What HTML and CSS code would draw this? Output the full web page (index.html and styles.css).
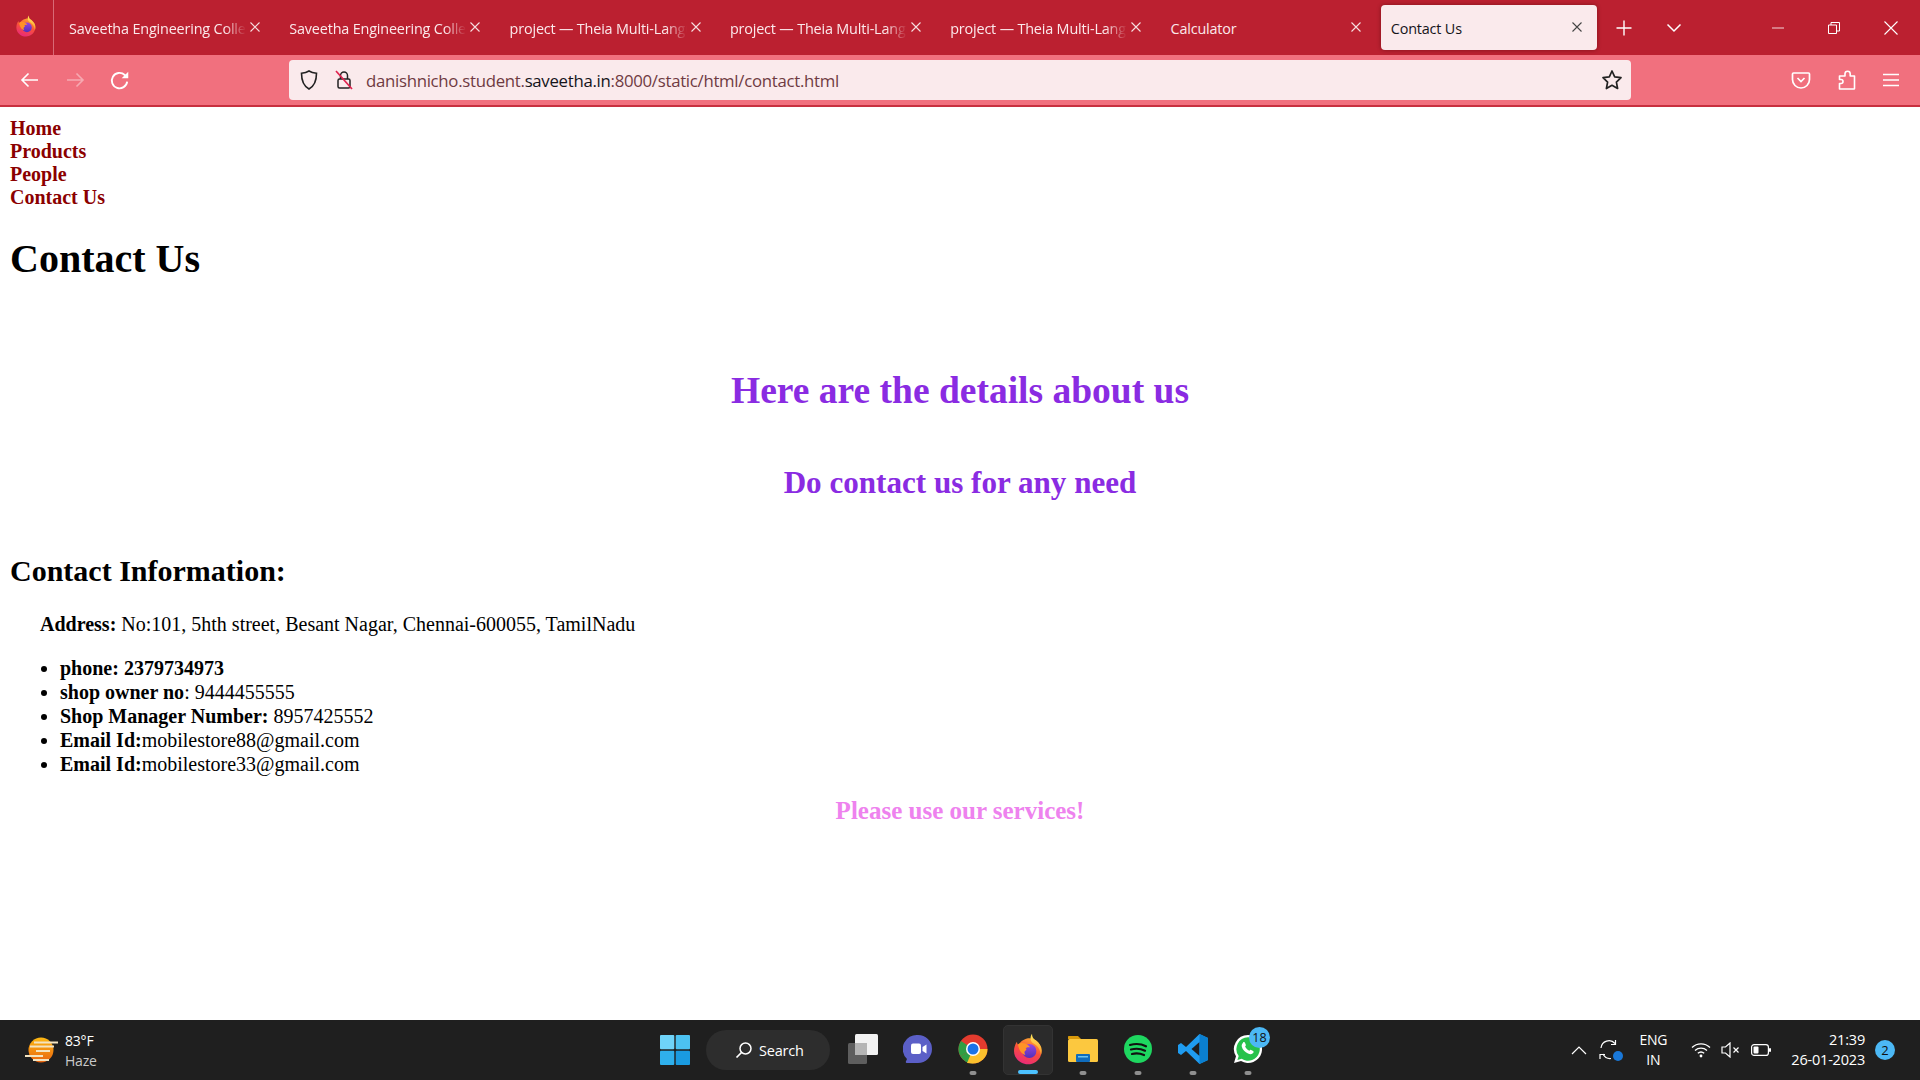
FILE: index.html
```html
<!DOCTYPE html>
<html lang="en">
<head>
<meta charset="utf-8">
<title>Contact Us</title>
<link rel="stylesheet" href="styles.css">
</head>
<body>
<svg class="defs" width="0" height="0" aria-hidden="true">
  <defs>
    <linearGradient id="fxBody" x1="0.8" y1="0" x2="0.4" y2="1"><stop offset="0" stop-color="#ffb02e"/><stop offset="0.5" stop-color="#f9503a"/><stop offset="1" stop-color="#ea2a78"/></linearGradient>
    <linearGradient id="fxTop" x1="0.5" y1="0" x2="0.5" y2="1"><stop offset="0" stop-color="#ffe75c"/><stop offset="1" stop-color="#ff9a2b"/></linearGradient>
    <linearGradient id="fxCore" x1="0.5" y1="0" x2="0.5" y2="1"><stop offset="0" stop-color="#9a45e0"/><stop offset="1" stop-color="#5030b8"/></linearGradient>
    <symbol id="firefox" viewBox="0 0 24 24">
      <path d="M12 4c2.500-.3 5.500.5 7.500 3 2.500 2.800 3.200 6.500 2 10-1.500 4-5.300 6.500-9.500 6.500C6.500 23.500 1.500 19.200 1.500 13.500c0-2.500.8-5 2.200-7 .1 1.200.5 2 1.200 2.500C6 7 8 5 12 4z" fill="url(#fxBody)"/>
      <path d="M15 .5c0 2.500 1 3.800 3 5.200 2.500 1.800 4.300 4.500 4.300 7.500 0 1.300-.2 2.500-.6 3.500-.3-3.800-2.200-7-5.200-8.700-2.700-1.500-3.500-4.500-1.500-7.500z" fill="url(#fxTop)"/>
      <circle cx="13" cy="13.500" r="5.300" fill="url(#fxCore)"/>
      <path d="M4.500 8.500c1.500-1.200 3.500-1.400 5.500-.6 1.500.6 3 1.800 3.500 2.800-1.500-.2-2.700 0-3.300.8.800.5.800 1.300 0 1.700-1.200.6-.9 2.300-.2 3.300-2.700-.5-5-3.500-5.500-8z" fill="#ff9326"/>
    </symbol>
    <symbol id="x" viewBox="0 0 12 12"><path d="M1.500 1.500l9 9M10.500 1.500l-9 9" fill="none" stroke="currentColor" stroke-width="1.100"/></symbol>
  </defs>
</svg>

<header class="browser">
  <div class="tabbar">
    <div class="appmenu"><svg class="fx-small" width="22" height="22"><use href="#firefox"/></svg></div>
    <div class="tabs">
      <div class="tab"><span class="tab-title fade">Saveetha Engineering College</span><svg class="tab-x" width="12" height="12"><use href="#x"/></svg></div>
      <div class="tab"><span class="tab-title fade">Saveetha Engineering College</span><svg class="tab-x" width="12" height="12"><use href="#x"/></svg></div>
      <div class="tab"><span class="tab-title fade">project — Theia Multi-Language</span><svg class="tab-x" width="12" height="12"><use href="#x"/></svg></div>
      <div class="tab"><span class="tab-title fade">project — Theia Multi-Language</span><svg class="tab-x" width="12" height="12"><use href="#x"/></svg></div>
      <div class="tab"><span class="tab-title fade">project — Theia Multi-Language</span><svg class="tab-x" width="12" height="12"><use href="#x"/></svg></div>
      <div class="tab"><span class="tab-title">Calculator</span><svg class="tab-x" width="12" height="12"><use href="#x"/></svg></div>
      <div class="tab active"><span class="tab-title">Contact Us</span><svg class="tab-x" width="12" height="12"><use href="#x"/></svg></div>
    </div>
    <svg class="newtab" width="16" height="16" viewBox="0 0 16 16"><path d="M8 .5v15M.5 8h15" stroke="#fff" stroke-width="1.400" fill="none"/></svg>
    <svg class="tablist" width="16" height="10" viewBox="0 0 16 10"><path d="M1.500 1.500L8 8l6.500-6.500" stroke="#fff" stroke-width="1.500" fill="none"/></svg>
    <div class="winctl">
      <svg width="12" height="12" viewBox="0 0 12 12"><path d="M0 6h12" stroke="#f3d5d8" stroke-width="1"/></svg>
      <svg width="12" height="12" viewBox="0 0 12 12"><path d="M.5 3h8v8.500h-8zM3 3V.5h8.500V9H8.500" stroke="#fff" stroke-width="1" fill="none"/></svg>
      <svg width="14" height="14" viewBox="0 0 14 14"><path d="M.5.500l13 13M13.500.500l-13 13" stroke="#fff" stroke-width="1.100" fill="none"/></svg>
    </div>
  </div>
  <div class="toolbar">
    <div class="nav-buttons">
      <svg width="20" height="16" viewBox="0 0 20 16"><path d="M18 8H2M8.500 1.500L2 8l6.500 6.500" stroke="#fff" stroke-width="1.600" fill="none"/></svg>
      <svg class="dim" width="20" height="16" viewBox="0 0 20 16"><path d="M2 8h16M11.500 1.500L18 8l-6.500 6.500" stroke="#fff" stroke-width="1.600" fill="none"/></svg>
      <svg class="reload" width="22" height="22" viewBox="0 0 20 20"><path d="M16.500 10.500a7 7 0 1 1-2.200-6L16 6" stroke="#fff" stroke-width="1.700" fill="none"/><path d="M17.500 1.500v6h-6z" fill="#fff"/></svg>
    </div>
    <div class="urlbar">
      <svg width="20" height="22" viewBox="0 0 20 22"><path d="M10 2c2.500 1.500 5 2 7.500 2.300 0 7-1.500 12.500-7.500 15.700C4 16.800 2.500 11.300 2.500 4.300 5 4 7.500 3.500 10 2z" fill="none" stroke="#222" stroke-width="1.600"/></svg>
      <svg class="lock" width="20" height="22" viewBox="0 0 20 22"><path d="M6.500 10V6.500a3.500 3.500 0 0 1 7 0V10" fill="none" stroke="#222" stroke-width="1.500"/><rect x="4" y="10" width="12" height="9" rx="1.500" fill="none" stroke="#222" stroke-width="1.500"/><path d="M2 2l16 18" stroke="#e0224e" stroke-width="1.700"/></svg>
      <div class="url"><span class="url-dim">danishnicho.student.</span><span class="url-host">saveetha.in</span><span class="url-dim">:8000/static/html/contact.html</span></div>
      <svg class="star" width="22" height="22" viewBox="0 0 22 22"><path d="M11 2l2.700 5.900 6.300.8-4.600 4.400 1.200 6.400L11 16.300l-5.600 3.200 1.200-6.400L2 8.700l6.300-.8z" fill="none" stroke="#222" stroke-width="1.700" stroke-linejoin="round"/></svg>
    </div>
    <div class="tools">
      <svg width="20" height="20" viewBox="0 0 20 20"><path d="M2.500 3h15c.6 0 1 .4 1 1v5.500a8.500 8.500 0 0 1-17 0V4c0-.6.4-1 1-1z" fill="none" stroke="#fff" stroke-width="1.700"/><path d="M6.500 8l3.500 3.500L13.500 8" fill="none" stroke="#fff" stroke-width="1.700"/></svg>
      <svg width="20" height="22" viewBox="0 0 20 22"><path d="M2.500 20v-5.500H4a2 2 0 0 0 0-4H2.500V7H8V4.800a2.600 2.600 0 0 1 5.200 0V7h4.300v12.500a.5.500 0 0 1-.5.500z" fill="none" stroke="#fff" stroke-width="1.600" stroke-linejoin="round"/></svg>
      <svg width="16" height="14" viewBox="0 0 16 14"><path d="M0 1.500h16M0 7h16M0 12.500h16" stroke="#fff" stroke-width="1.500"/></svg>
    </div>
  </div>
</header>

<main class="page">
  <nav class="site-nav">
    <a href="#">Home</a>
    <a href="#">Products</a>
    <a href="#">People</a>
    <a href="#">Contact Us</a>
  </nav>
  <h1 class="page-title">Contact Us</h1>
  <h1 class="lead">Here are the details about us</h1>
  <h2 class="sublead">Do contact us for any need</h2>
  <h2 class="info-title">Contact Information:</h2>
  <p class="address"><b>Address:</b> No:101, 5hth street, Besant Nagar, Chennai-600055, TamilNadu</p>
  <ul class="contacts">
    <li><b>phone: 2379734973</b></li>
    <li><b>shop owner no</b>: 9444455555</li>
    <li><b>Shop Manager Number:</b> 8957425552</li>
    <li><b>Email Id:</b>mobilestore88@gmail.com</li>
    <li><b>Email Id:</b>mobilestore33@gmail.com</li>
  </ul>
  <h3 class="closing">Please use our services!</h3>
</main>

<footer class="taskbar">
  <div class="weather">
    <svg width="34" height="28" viewBox="0 0 34 28">
      <defs><linearGradient id="sun" x1="0" y1="0" x2="0" y2="1"><stop offset="0" stop-color="#fdb913"/><stop offset="1" stop-color="#e8620e"/></linearGradient></defs>
      <circle cx="17" cy="14" r="12.500" fill="url(#sun)"/>
      <path d="M10 6.500h24M6 10.500h24M12 15h14M1 20h18M9 24h16" stroke="#f3e3c0" stroke-width="2.200"/>
    </svg>
    <div class="weather-text"><span>83°F</span><span class="haze">Haze</span></div>
  </div>
  <div class="task-center">
    <svg class="task-icon" width="30" height="30" viewBox="0 0 30 30">
      <rect x="0" y="0" width="14.300" height="14.300" rx="1" fill="#6fd3f8"/><rect x="15.700" y="0" width="14.300" height="14.300" rx="1" fill="#4cc2f1"/><rect x="0" y="15.700" width="14.300" height="14.300" rx="1" fill="#2fb0ec"/><rect x="15.700" y="15.700" width="14.300" height="14.300" rx="1" fill="#1a9be0"/>
    </svg>
    <div class="search">
      <svg width="18" height="18" viewBox="0 0 18 18"><circle cx="10.500" cy="7.500" r="5.500" fill="none" stroke="#fff" stroke-width="1.500"/><path d="M6.500 11.500L1.500 16.500" stroke="#fff" stroke-width="1.700"/></svg>
      <span>Search</span>
    </div>
    <div class="apps">
      <div class="app"><svg width="30" height="30" viewBox="0 0 30 30"><rect x="0" y="9" width="19" height="21" rx="1.500" fill="#5e5e5e"/><rect x="7" y="0" width="23" height="21" rx="1.500" fill="#f2f2f2"/><rect x="7" y="9" width="12" height="12" fill="#b5b5b5"/></svg></div>
      <div class="app"><svg width="30" height="30" viewBox="0 0 30 30"><path d="M15 1a14 14 0 0 1 0 28H4c-1 0-1.500-.8-1-1.700l1-2.300A14 14 0 0 1 15 1z" fill="#5b5fc7"/><rect x="8" y="9.500" width="10" height="10.500" rx="2" fill="#fff"/><path d="M19.500 13l4-2.500v9l-4-2.500z" fill="#fff"/></svg></div>
      <div class="app running"><svg width="30" height="30" viewBox="0 0 30 30"><circle cx="15" cy="15" r="14.500" fill="#e33b2e"/><path d="M15 15L2.500 22.300A14.500 14.500 0 0 0 15 29.500z" fill="#2f9e44"/><path d="M15 15L2.500 22.300A14.500 14.500 0 0 1 3 7L15 15z" fill="#2f9e44"/><path d="M15 15h14.500A14.500 14.500 0 0 1 15 29.500L9 29z" fill="#fbc02d"/><circle cx="15" cy="15" r="7" fill="#fff"/><circle cx="15" cy="15" r="5.500" fill="#1a73e8"/></svg></div>
      <div class="app current"><svg width="32" height="32"><use href="#firefox"/></svg></div>
      <div class="app running"><svg width="30" height="30" viewBox="0 0 30 30"><path d="M0 3c0-.6.4-1 1-1h9l3 3h-13z" fill="#d99a0b"/><rect x="0" y="5" width="30" height="23" rx="1.500" fill="#fcc83f"/><rect x="8" y="20" width="14" height="8" rx="1" fill="#0f6cbd"/><rect x="10" y="22" width="10" height="1.500" fill="#6cc3f0"/></svg></div>
      <div class="app running"><svg width="30" height="30" viewBox="0 0 30 30"><circle cx="15" cy="15" r="14" fill="#1ed760"/><path d="M7 11c6-1.700 11-1.300 16 1.300M8 15.500c5-1.300 9.500-1 14 1.200M9 20c4-1 8-.7 12 1" fill="none" stroke="#111" stroke-width="2.200" stroke-linecap="round"/></svg></div>
      <div class="app running"><svg width="30" height="30" viewBox="0 0 30 30"><path d="M21.500 0L30 4v22l-8.500 4L8 17l-5 4-3-2V11l3-2 5 4z" fill="#1f9cf0"/><path d="M21.500 8l-8 7 8 7z" fill="#1f1f1f"/><path d="M21.500 0L30 4v22l-8.500 4z" fill="#0a7fd0"/></svg></div>
      <div class="app running whatsapp"><svg width="30" height="30" viewBox="0 0 30 30"><path d="M15 1a14 14 0 1 1-7 26.100L1 29l2-6.700A14 14 0 0 1 15 1z" fill="#fff"/><path d="M15 3.300a11.700 11.700 0 1 1-6.300 21.500l-4.300 1.300 1.300-4.200A11.700 11.700 0 0 1 15 3.300z" fill="#27c24c"/><path d="M10 8.500c1-.8 1.700-.5 2.200.7l.6 1.500c.2.600 0 1-.7 1.700.9 1.900 2.300 3.300 4.300 4.300.7-.8 1.100-1 1.700-.8l1.600.8c1 .5 1.200 1.100.6 2.100-1 1.500-3 1.800-5.300.7-3-1.400-5.300-3.700-6.200-6.800-.4-1.700.3-3.200 1.200-3.700z" fill="#fff"/></svg><span class="wa-badge">18</span></div>
    </div>
  </div>
  <div class="tray">
    <svg class="tray-chev" width="16" height="10" viewBox="0 0 16 10"><path d="M1 9l7-7 7 7" stroke="#fff" stroke-width="1.200" fill="none"/></svg>
    <div class="sync"><svg width="22" height="22" viewBox="0 0 22 22"><path d="M2 9a8 8 0 0 1 14-4.500M4 15a8 8 0 0 0 8 4.500" fill="none" stroke="#fff" stroke-width="1.200"/><path d="M16.500 1v4.500H12M1 20v-4.500h5" fill="none" stroke="#fff" stroke-width="1.200"/></svg><span class="sync-dot"></span></div>
    <div class="lang"><span>ENG</span><span>IN</span></div>
    <div class="tray-icons">
      <svg width="20" height="16" viewBox="0 0 20 16"><path d="M1 5.500a13 13 0 0 1 18 0M4 8.500a9 9 0 0 1 12 0M6.800 11.300a5 5 0 0 1 6.400 0" fill="none" stroke="#fff" stroke-width="1.300"/><circle cx="10" cy="14" r="1.400" fill="#fff"/></svg>
      <svg width="20" height="16" viewBox="0 0 20 16"><path d="M1 5h3.500L9 1v14l-4.500-4H1z" fill="none" stroke="#fff" stroke-width="1.200"/><path d="M12.500 5.500l5 5M17.500 5.500l-5 5" stroke="#fff" stroke-width="1.200"/></svg>
      <svg width="20" height="14" viewBox="0 0 20 14"><rect x=".6" y="1.600" width="16.800" height="10.800" rx="2.500" fill="none" stroke="#fff" stroke-width="1.200"/><rect x="2.500" y="3.500" width="5" height="7" rx="1" fill="#fff"/><rect x="18" y="5" width="2" height="4" rx="1" fill="#fff"/></svg>
    </div>
    <div class="clock"><span>21:39</span><span>26-01-2023</span></div>
    <span class="notif">2</span>
  </div>
</footer>
</body>
</html>
```
FILE: styles.css
```css
* { box-sizing: border-box; }
html, body { margin: 0; height: 100%; overflow: hidden; }
body {
  display: flex;
  flex-direction: column;
  height: 1080px;
  background: #fff;
  font-family: "Liberation Serif", "Times New Roman", serif;
  color: #000;
}
.defs { position: absolute; }

/* browser chrome */
.browser { font-family: "Open Sans", "Noto Sans", sans-serif; flex: none; }
.tabbar {
  height: 55px;
  background: #bb2030;
  display: flex;
  align-items: center;
  color: #fff;
}
.appmenu {
  width: 54px;
  height: 55px;
  border-right: 1px solid #d86a76;
  display: flex;
  align-items: center;
  justify-content: center;
  padding-bottom: 4px;
  padding-right: 2px;
}
.tabs { display: flex; margin-left: 5px; }
.tab {
  width: 220.3px;
  height: 45px;
  padding: 0 0 0 10px;
  display: flex;
  align-items: center;
  position: relative;
  font-size: 14.400px;
  color: #fbe9eb;
}
.tab-title { width: 177px; padding-top: 2px; white-space: nowrap; overflow: hidden; flex: none; letter-spacing: -0.17px; }
.tab-title.fade {
  -webkit-mask-image: linear-gradient(to right, #000 88%, transparent 100%);
  mask-image: linear-gradient(to right, #000 88%, transparent 100%);
}
.tab-x { margin-left: 3px; margin-top: -2px; color: #f7dfe1; flex: none; }
.tab.active {
  background: #faeaec;
  color: #15141a;
  border-radius: 4px;
  box-shadow: 0 0 4px rgba(60, 0, 0, .45);
  width: 216px;
}
.tab.active .tab-x { color: #444; margin-left: 3px; }
.newtab { margin-left: 19px; flex: none; }
.tablist { margin-left: 34px; flex: none; }
.winctl { margin-left: auto; display: flex; align-items: center; gap: 44px; padding-right: 22px; }
.winctl svg { flex: none; }
.toolbar {
  height: 52px;
  background: #f1707e;
  border-bottom: 2px solid #c8303f;
  display: flex;
  align-items: center;
}
.nav-buttons { width: 289px; display: flex; align-items: center; gap: 25px; padding-left: 20px; }
.nav-buttons .dim { opacity: .4; }
.reload { margin: 2px 0 0 -1px; }
.urlbar {
  width: 1342px;
  height: 40px;
  background: #faeaec;
  border-radius: 4px;
  display: flex;
  align-items: center;
  gap: 9px;
  padding: 0 8px 0 10px;
}
.lock { margin-left: 6px; }
.url { flex: 1; font-size: 16.800px; margin-left: 3px; letter-spacing: -0.29px; white-space: nowrap; }
.url-dim { color: #6f3a42; }
.url-host { color: #15141a; }
.star { flex: none; }
.tools { flex: 1; display: flex; justify-content: flex-end; align-items: center; gap: 26px; padding-right: 21px; }

/* page */
.page { flex: 1; min-height: 0; padding: 10px; font-size: 20px; }
.site-nav { display: flex; flex-direction: column; align-items: flex-start; }
.site-nav a { color: #8b0000; font-weight: bold; text-decoration: none; line-height: 23px; }
.page-title { font-size: 40px; line-height: 46px; margin: 27px 0 0; }
.lead { font-size: 37.500px; line-height: 43px; margin: 86.500px 0 0; text-align: center; color: #8a2be2; }
.sublead { font-size: 31.100px; line-height: 36px; margin: 53px 0 0; text-align: center; color: #8a2be2; }
.info-title { font-size: 30px; line-height: 35px; margin: 52px 0 0; }
.address { margin: 25px 0 0 30px; line-height: 23px; }
.contacts { margin: 20px 0 0; padding: 0 0 0 50px; line-height: 24px; }
.closing { font-size: 25px; line-height: 29px; margin: 20px 0 0; text-align: center; color: #ee82ee; }

/* taskbar */
.taskbar {
  flex: none;
  height: 60px;
  background: #1f1f1f;
  color: #fff;
  display: flex;
  align-items: center;
  position: relative;
  font-family: "Open Sans", "Noto Sans", sans-serif;
}
.weather { display: flex; align-items: center; gap: 7px; padding-left: 24px; width: 660px; }
.weather-text { display: flex; flex-direction: column; font-size: 14px; line-height: 20px; letter-spacing: -0.2px; padding-top: 2px; }
.haze { color: #c9c9c9; }
.task-center { display: flex; align-items: center; }
.task-icon { flex: none; }
.search {
  margin-left: 16px;
  width: 124px;
  height: 40px;
  background: #2d2d2d;
  border-radius: 20px;
  display: flex;
  align-items: center;
  gap: 6px;
  padding-left: 29px;
  font-size: 14.500px;
  letter-spacing: -0.2px;
}
.apps { display: flex; margin-left: 5px; }
.app {
  width: 55px;
  height: 50px;
  display: flex;
  align-items: center;
  justify-content: center;
  position: relative;
  border-radius: 5px;
  padding-bottom: 2px;
}
.app.running::after,
.app.current::after {
  content: "";
  position: absolute;
  bottom: 0;
  left: 50%;
  transform: translateX(-50%);
  width: 7px;
  height: 4px;
  border-radius: 2px;
  background: #8f8f8f;
}
.app.current { background: #2b2b2b; width: 50px; margin: 0 2.5px; border: 1px solid #333; }
.app.current::after { width: 20px; background: #4cc2ff; }
.wa-badge {
  position: absolute;
  top: 2px;
  right: 5px;
  width: 21px;
  height: 21px;
  border-radius: 50%;
  background: #4cb8f5;
  color: #111;
  font-size: 12.500px;
  line-height: 21px;
  text-align: center;
}
.tray { margin-left: auto; display: flex; align-items: center; padding-right: 25px; font-size: 14px; }
.tray-chev { flex: none; }
.sync { position: relative; margin-left: 12px; display: flex; }
.sync-dot { position: absolute; right: -2px; bottom: 0; width: 10px; height: 10px; border-radius: 50%; background: #1a78d8; }
.lang { display: flex; flex-direction: column; align-items: center; margin-left: 18px; line-height: 20px; letter-spacing: -0.2px; }
.tray-icons { display: flex; align-items: center; gap: 10px; margin-left: 24px; }
.clock { display: flex; flex-direction: column; align-items: flex-end; margin-left: 20px; line-height: 20px; font-size: 14.500px; letter-spacing: -0.2px; }
.notif {
  margin-left: 10px;
  width: 20px;
  height: 20px;
  border-radius: 50%;
  background: #4cb8f5;
  color: #111;
  font-size: 13px;
  line-height: 20px;
  text-align: center;
}
```
